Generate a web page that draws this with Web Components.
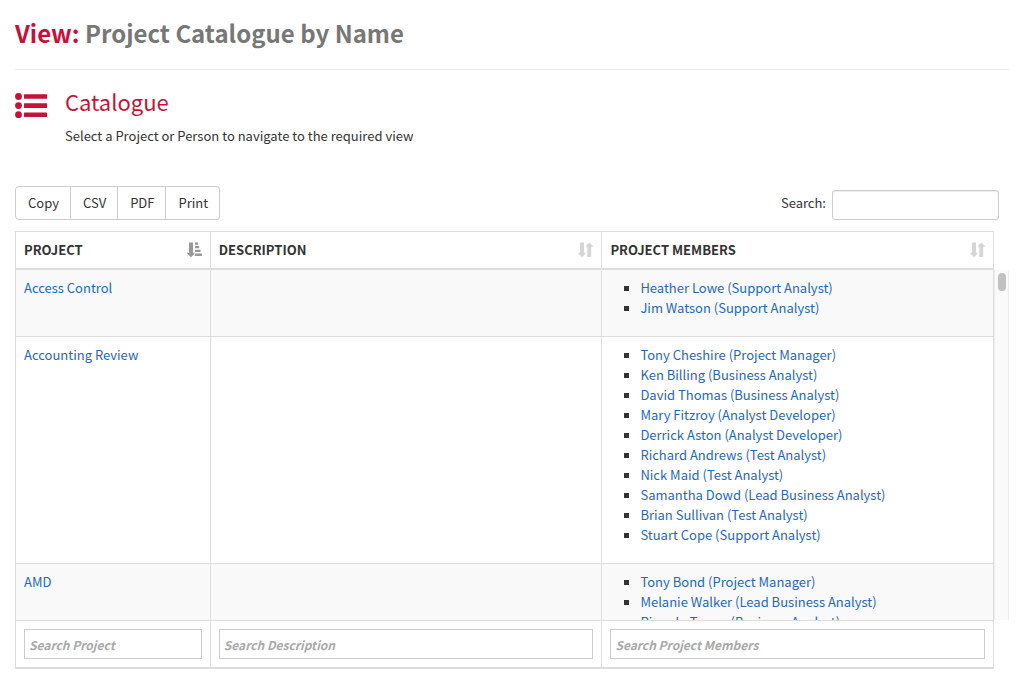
<!DOCTYPE html>
<html lang="en">
<head>
<meta charset="utf-8">
<meta name="viewport" content="width=device-width, initial-scale=1">
<title>Project Catalogue by Name</title>
<style>
  body {
    margin: 0;
    padding: 15px;
    background: #fff;
    color: #333;
    font: 13px/20px "Noto Sans CJK SC", "Noto Sans", sans-serif;
    --brand: #c41239;
    --link: #1f68bd;
    --line: #ddd;
  }
</style>
</head>
<body>
<catalogue-page>
  <view-heading><span slot="kind">View:</span>Project Catalogue by Name</view-heading>
  <section-intro>
    <span slot="title">Catalogue</span>
    Select a Project or Person to navigate to the required view
  </section-intro>
  <table-toolbar></table-toolbar>
  <catalogue-table></catalogue-table>
</catalogue-page>

<script>
class BaseElement extends HTMLElement {
  constructor() {
    super();
    this.attachShadow({ mode: "open" }).innerHTML =
      "<style>*{box-sizing:border-box}" + this.constructor.css + "</style>" + this.render();
  }
}

customElements.define("catalogue-page", class extends BaseElement {
  static css = ":host{display:flex;flex-direction:column}";
  render() { return "<slot></slot>"; }
});

customElements.define("view-heading", class extends BaseElement {
  static css = `
    :host{display:block;border-bottom:1px solid #eee;padding-bottom:18px}
    h1{margin:0;font-size:24px;line-height:36px;font-weight:700;color:#777}
    ::slotted(span){color:var(--brand)}`;
  render() { return `<h1><slot name="kind"></slot> <slot></slot></h1>`; }
});

customElements.define("section-intro", class extends BaseElement {
  static css = `
    :host{display:grid;grid-template-columns:32px 1fr;column-gap:18px;padding:16px 0 40px}
    svg{display:block;width:32px;height:26px;margin-top:7px;fill:var(--brand)}
    h2{margin:0 0 10px;font-size:22px;line-height:30px;font-weight:400;color:var(--brand)}
    p{margin:0}`;
  render() {
    return `<svg viewBox="0 0 32 26" aria-hidden="true">
        <circle cx="3.5" cy="3.5" r="3.4"/><circle cx="3.5" cy="12.6" r="3.4"/><circle cx="3.5" cy="21.7" r="3.4"/>
        <rect x="9" y="1.2" width="23" height="4.6" rx=".5"/><rect x="9" y="10.3" width="23" height="4.6" rx=".5"/><rect x="9" y="19.4" width="23" height="4.6" rx=".5"/>
      </svg>
      <div><h2><slot name="title"></slot></h2><p><slot></slot></p></div>`;
  }
});

customElements.define("table-toolbar", class extends BaseElement {
  static css = `
    :host{display:flex;justify-content:space-between;padding-right:10px;margin-bottom:11px}
    .group{display:flex}
    button{font:inherit;color:#333;background:#fff;border:1px solid #ccc;padding:6px 11px 6px 12px;height:34px;margin:0}
    button + button{border-left:0}
    button:first-child{border-radius:4px 0 0 4px}
    button:last-child{border-radius:0 4px 4px 0}
    label{display:flex;align-items:center;gap:6px}
    input{font:inherit;width:167px;height:30px;margin:4px 0 0;padding:4px 10px;border:1px solid #ccc;border-radius:3px;background:#fff;box-shadow:inset 0 1px 1px rgba(0,0,0,.075)}`;
  render() {
    const buttons = ["Copy", "CSV", "PDF", "Print"].map(t => `<button type="button">${t}</button>`).join("");
    return `<div class="group">${buttons}</div>
      <label for="q">Search:<input id="q" type="search"></label>`;
  }
});

customElements.define("sort-icon", class extends BaseElement {
  static css = `
    :host{display:block;flex:none;color:#d6d6d6}
    :host([sorted]){color:#999}
    svg{display:block;width:16px;height:16px;fill:currentColor}`;
  render() {
    const down = `<path d="M3 .6h4v10.200h1.500v.8L5 15.200 1.200 11.600v-.8H3z"/>`;
    return this.hasAttribute("sorted")
      ? `<svg viewBox="0 0 16 16">${down}<path d="M9 .4h3v2.300H9zM9 4h4.200v2.300H9zM9 7.700h5.600V10H9zM9 11.500h7V14H9z"/></svg>`
      : `<svg viewBox="0 0 16 16">${down}<path d="M10.300 15h3.900V4.800H16V4L12.300.4 8.800 4v.8h1.500z"/></svg>`;
  }
});

const COLUMNS = ["Project", "Description", "Project Members"];
const PROJECTS = [
  ["Access Control", ["Heather Lowe (Support Analyst)", "Jim Watson (Support Analyst)"]],
  ["Accounting Review", [
    "Tony Cheshire (Project Manager)", "Ken Billing (Business Analyst)",
    "David Thomas (Business Analyst)", "Mary Fitzroy (Analyst Developer)",
    "Derrick Aston (Analyst Developer)", "Richard Andrews (Test Analyst)",
    "Nick Maid (Test Analyst)", "Samantha Dowd (Lead Business Analyst)",
    "Brian Sullivan (Test Analyst)", "Stuart Cope (Support Analyst)"]],
  ["AMD", ["Tony Bond (Project Manager)", "Melanie Walker (Lead Business Analyst)",
    "Ricardo Torres (Business Analyst)"]]
];

customElements.define("catalogue-table", class extends BaseElement {
  static css = `
    :host{display:block}
    .frame,.foot{padding-right:15px}
    table{width:100%;table-layout:fixed;border-collapse:separate;border-spacing:0}
    col{width:40%} col:first-child{width:20%}
    th,td{padding:8px;text-align:left;vertical-align:top;border-right:1px solid var(--line)}
    th:first-child,td:first-child{border-left:1px solid var(--line)}
    .frame th{border-top:1px solid var(--line);border-bottom:2px solid var(--line);text-transform:uppercase;font-weight:700}
    .frame th > div{display:flex;align-items:center;justify-content:space-between}
    .foot td{border-top:1px solid var(--line);border-bottom:2px solid var(--line)}
    .body{display:grid;grid-template-columns:1fr 15px;height:350px}
    .scroll{overflow:auto;scrollbar-width:none}
    .scroll tr:nth-child(odd){background:#f9f9f9}
    .scroll tr + tr td{border-top:1px solid var(--line)}
    .track{background:#fafafa;border-right:1px solid #ededed;border-left:1px solid #eee;padding:3px 2px 3px 3px}
    .thumb{height:18px;border-radius:4px;background:#c1c1c1}
    ul{margin:0 0 10px;padding:0 0 0 30px;list-style:none}
    li{position:relative}
    li::before{content:"";position:absolute;left:-16px;top:8px;width:5px;height:5px;background:#333}
    a{color:var(--link);text-decoration:none}
    input{display:block;width:100%;height:30px;margin:0;padding:4px;border:1px solid #ccc;border-radius:0;background:#fff;font:inherit;font-size:12px;font-weight:700;font-style:italic}
    input::placeholder{color:#a9a9a9;opacity:1}`;
  render() {
    const cols = "<colgroup><col><col><col></colgroup>";
    const heads = COLUMNS.map((c, i) =>
      `<th scope="col"><div>${c}<sort-icon${i ? "" : " sorted"}></sort-icon></div></th>`).join("");
    const rows = PROJECTS.map(([name, people]) =>
      `<tr><td><a href="#">${name}</a></td><td></td><td><ul>${people.map(p =>
        `<li><a href="#">${p}</a></li>`).join("")}</ul></td></tr>`).join("");
    const filters = COLUMNS.map(c =>
      `<td><input type="text" aria-label="Search ${c}" placeholder="Search ${c}"></td>`).join("");
    return `<div class="frame"><table>${cols}<thead><tr>${heads}</tr></thead></table></div>
      <div class="body"><div class="scroll"><table>${cols}<tbody>${rows}</tbody></table></div>
        <div class="track"><div class="thumb"></div></div></div>
      <div class="foot"><table>${cols}<tbody><tr>${filters}</tr></tbody></table></div>`;
  }
});
</script>
</body>
</html>
